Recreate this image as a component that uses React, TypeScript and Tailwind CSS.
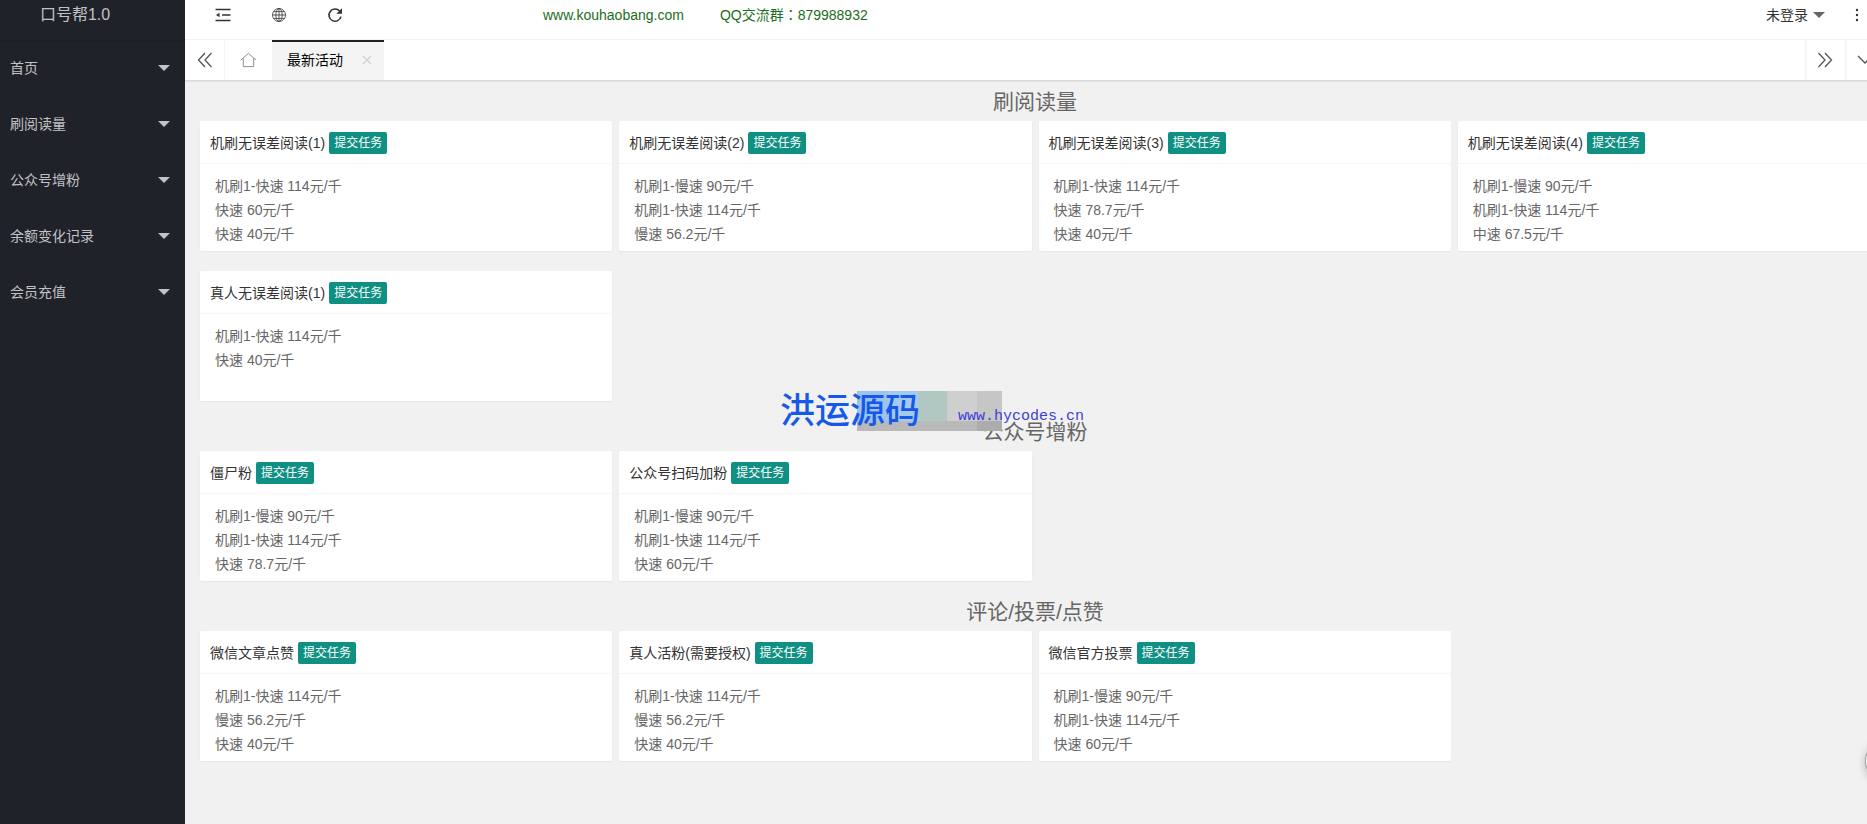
interface Task {
  title: string;
  prices: string[];
}

interface Section {
  name: string;
  tasks: Task[];
}

const MENU = ["首页", "刷阅读量", "公众号增粉", "余额变化记录", "会员充值"];

const SECTIONS: Section[] = [
  {
    name: "刷阅读量",
    tasks: [
      { title: "机刷无误差阅读(1)", prices: ["机刷1-快速 114元/千", "快速 60元/千", "快速 40元/千"] },
      { title: "机刷无误差阅读(2)", prices: ["机刷1-慢速 90元/千", "机刷1-快速 114元/千", "慢速 56.2元/千"] },
      { title: "机刷无误差阅读(3)", prices: ["机刷1-快速 114元/千", "快速 78.7元/千", "快速 40元/千"] },
      { title: "机刷无误差阅读(4)", prices: ["机刷1-慢速 90元/千", "机刷1-快速 114元/千", "中速 67.5元/千"] },
      { title: "真人无误差阅读(1)", prices: ["机刷1-快速 114元/千", "快速 40元/千"] },
    ],
  },
  {
    name: "公众号增粉",
    tasks: [
      { title: "僵尸粉", prices: ["机刷1-慢速 90元/千", "机刷1-快速 114元/千", "快速 78.7元/千"] },
      { title: "公众号扫码加粉", prices: ["机刷1-慢速 90元/千", "机刷1-快速 114元/千", "快速 60元/千"] },
    ],
  },
  {
    name: "评论/投票/点赞",
    tasks: [
      { title: "微信文章点赞", prices: ["机刷1-快速 114元/千", "慢速 56.2元/千", "快速 40元/千"] },
      { title: "真人活粉(需要授权)", prices: ["机刷1-快速 114元/千", "慢速 56.2元/千", "快速 40元/千"] },
      { title: "微信官方投票", prices: ["机刷1-慢速 90元/千", "机刷1-快速 114元/千", "快速 60元/千"] },
    ],
  },
];

export default function App() {
  return (
    <div className="relative flex min-h-screen overflow-hidden bg-[#f1f1f1] font-['Liberation_Sans','Noto_Sans_CJK_SC',sans-serif] text-sm text-[#666]">
      <Sidebar />
      {/* the panel is wider than the space beside the menu, its right edge is cut off */}
      <div className="w-[calc(100vw-167px)] shrink-0">
        <TopBar />
        <TabBar />
        <main className="px-[15px] pb-[60px] pt-[7px]">
          {SECTIONS.map((section) => (
            <section key={section.name} className="mb-4">
              <h2 className="mb-1 text-center text-[21px] leading-[30px]">{section.name}</h2>
              <div className="grid grid-cols-4 gap-x-[7px] gap-y-5">
                {section.tasks.map((task) => (
                  <TaskCard key={task.title} task={task} />
                ))}
              </div>
            </section>
          ))}
        </main>
      </div>
      <Watermark />
      <button
        aria-label="客服"
        className="absolute right-[-38px] top-[741px] size-10 rounded-full border border-[#999] bg-white shadow-[0_2px_8px_rgba(0,0,0,0.25)]"
      />
    </div>
  );
}

function Sidebar() {
  return (
    <aside className="w-[185px] shrink-0 bg-[#20222a] text-[#c1c2c4]">
      <div className="h-10 w-full shadow-[0_1px_2px_rgba(0,0,0,0.15)]">
        <h1 className="w-[150px] text-center text-base leading-[29px]">口号帮1.0</h1>
      </div>
      <nav>
        {MENU.map((item) => (
          <a key={item} href="#" className="flex h-14 items-center justify-between pl-[10px] pr-[15px]">
            {item}
            <Caret />
          </a>
        ))}
      </nav>
    </aside>
  );
}

function TopBar() {
  return (
    <header className="flex h-10 items-center border-b border-[#f4f4f4] bg-white pb-[9px] text-[#333]">
      <button aria-label="侧边伸缩" className="ml-[30px]">
        <svg width="16" height="16" viewBox="0 0 16 16" fill="none" stroke="currentColor" strokeWidth="1.6">
          <path d="M.5 2.500h15M7 8h8.500M.5 13.500h15" />
          <path d="M1 8 4.500 5.800v4.400z" fill="currentColor" stroke="none" />
        </svg>
      </button>
      <button aria-label="前台" className="ml-10">
        <svg width="16" height="16" viewBox="0 0 16 16" fill="none" stroke="currentColor" strokeWidth="0.8">
          <circle cx="8" cy="8" r="6.5" />
          <ellipse cx="8" cy="8" rx="3.2" ry="6.5" />
          <path d="M8 1.5v13M1.5 8h13M2.6 4.6h10.8M2.6 11.4h10.8" />
        </svg>
      </button>
      <button aria-label="刷新" className="ml-10">
        <svg width="16" height="16" viewBox="0 0 16 16" fill="none" stroke="currentColor" strokeWidth="1.6">
          <path d="M12.6 4A6.1 6.1 0 1 0 14 9.6" />
          <path d="M15 1.2v5.6H9.4z" fill="currentColor" stroke="none" />
        </svg>
      </button>
      <a href="#" className="ml-[200px] text-[#1a6e1a]">www.kouhaobang.com</a>
      <span className="ml-9 font-['Liberation_Sans','Noto_Sans_CJK_TC',sans-serif] text-[#1a6e1a]" lang="zh-TW">
        QQ交流群：879988932
      </span>
      <button className="ml-auto mr-[30px] flex items-center gap-[5px]">
        未登录
        <span className="text-[#666]"><Caret /></span>
      </button>
      <button aria-label="更多" className="mr-[26px]">
        <svg width="4" height="16" viewBox="0 0 4 16" fill="currentColor">
          <circle cx="2" cy="3" r="1.2" />
          <circle cx="2" cy="8" r="1.2" />
          <circle cx="2" cy="13" r="1.2" />
        </svg>
      </button>
    </header>
  );
}

function TabBar() {
  return (
    <div className="relative flex h-10 bg-white shadow-[0_1px_2px_rgba(0,0,0,0.15)]">
      <button aria-label="向左" className="flex w-10 items-center justify-center border-r border-[#f4f4f4]">
        <svg width="16" height="16" viewBox="0 0 16 16" fill="none" stroke="#555" strokeWidth="1.3">
          <path d="M8 1 1.5 8 8 15M14.5 1 8 8l6.5 7" />
        </svg>
      </button>
      <button aria-label="主页" className="flex w-[47px] items-center justify-center">
        <svg width="17" height="16" viewBox="0 0 18 16" fill="none" stroke="#888" strokeWidth="1">
          <path d="M1 8 9 1l8 7M3.5 6v9h11V6" />
        </svg>
      </button>
      <div className="flex w-28 items-center justify-between border-t-2 border-[#20222a] bg-[#f4f4f4] pb-[2px] pl-[15px] pr-3 text-black">
        最新活动
        <button aria-label="关闭" className="text-[#d0d0d0]">
          <svg width="10" height="10" viewBox="0 0 10 10" fill="none" stroke="currentColor" strokeWidth="1.2">
            <path d="m1 1 8 8M9 1 1 9" />
          </svg>
        </button>
      </div>
      <button aria-label="向右" className="ml-auto flex w-10 items-center justify-center border-l-2 border-[#f6f6f6] pr-[2px]">
        <svg width="16" height="16" viewBox="0 0 16 16" fill="none" stroke="#555" strokeWidth="1.3">
          <path d="m1.5 1 6.500 7-6.500 7M8 1l6.500 7L8 15" />
        </svg>
      </button>
      <button aria-label="页签操作" className="flex w-10 items-center justify-center border-l-2 border-[#f6f6f6] pr-[2px]">
        <svg width="16" height="10" viewBox="0 0 16 10" fill="none" stroke="#555" strokeWidth="1.3">
          <path d="m1 1 7 7 7-7" />
        </svg>
      </button>
    </div>
  );
}

function TaskCard({ task }: { task: Task }) {
  return (
    <article className="min-h-[130px] rounded-xs bg-white shadow-[0_1px_2px_rgba(0,0,0,0.05)]">
      <div className="flex h-[43px] items-center gap-1 border-b border-[#f6f6f6] px-[10px] pt-[2px]">
        <h3 className="leading-[22px] text-[#333]">{task.title}</h3>
        <button className="h-[22px] rounded-xs bg-[#0f9083] px-[5px] text-xs leading-[22px] text-white">提交任务</button>
      </div>
      <ul className="px-[15px] pb-[5px] pt-[10px] leading-6">
        {task.prices.map((price) => (
          <li key={price}>{price}</li>
        ))}
      </ul>
    </article>
  );
}

function Watermark() {
  return (
    <div className="pointer-events-none absolute left-[780px] top-[391px] h-10">
      <div className="absolute left-[77px] top-0 h-10 w-[145px]">
        <div className="flex h-[30px]">
          <div className="w-[31px] bg-[#9cc3ee]" />
          <div className="w-[30px] bg-[#a6c9f0]" />
          <div className="w-[29px] bg-[#b1c7c2]" />
          <div className="w-[30px] bg-[#cfcfd0]" />
          <div className="w-[25px] bg-[#c6c6c7]" />
        </div>
        <div className="flex h-[10px]">
          <div className="w-[120px] bg-[#b9b9ba]" />
          <div className="w-[25px] bg-[#acacad]" />
        </div>
      </div>
      <div className="relative flex h-10 items-center gap-[38px]">
        <span className="text-[35px] font-medium leading-10 text-[#1659e8]">洪运源码</span>
        <span className="pt-3 font-['Liberation_Mono',monospace] text-[15px] text-[#4040d8]">www.hycodes.cn</span>
      </div>
    </div>
  );
}

function Caret() {
  return (
    <svg width="12" height="6" viewBox="0 0 12 6" fill="currentColor">
      <path d="M0 0h12L6 6z" />
    </svg>
  );
}
